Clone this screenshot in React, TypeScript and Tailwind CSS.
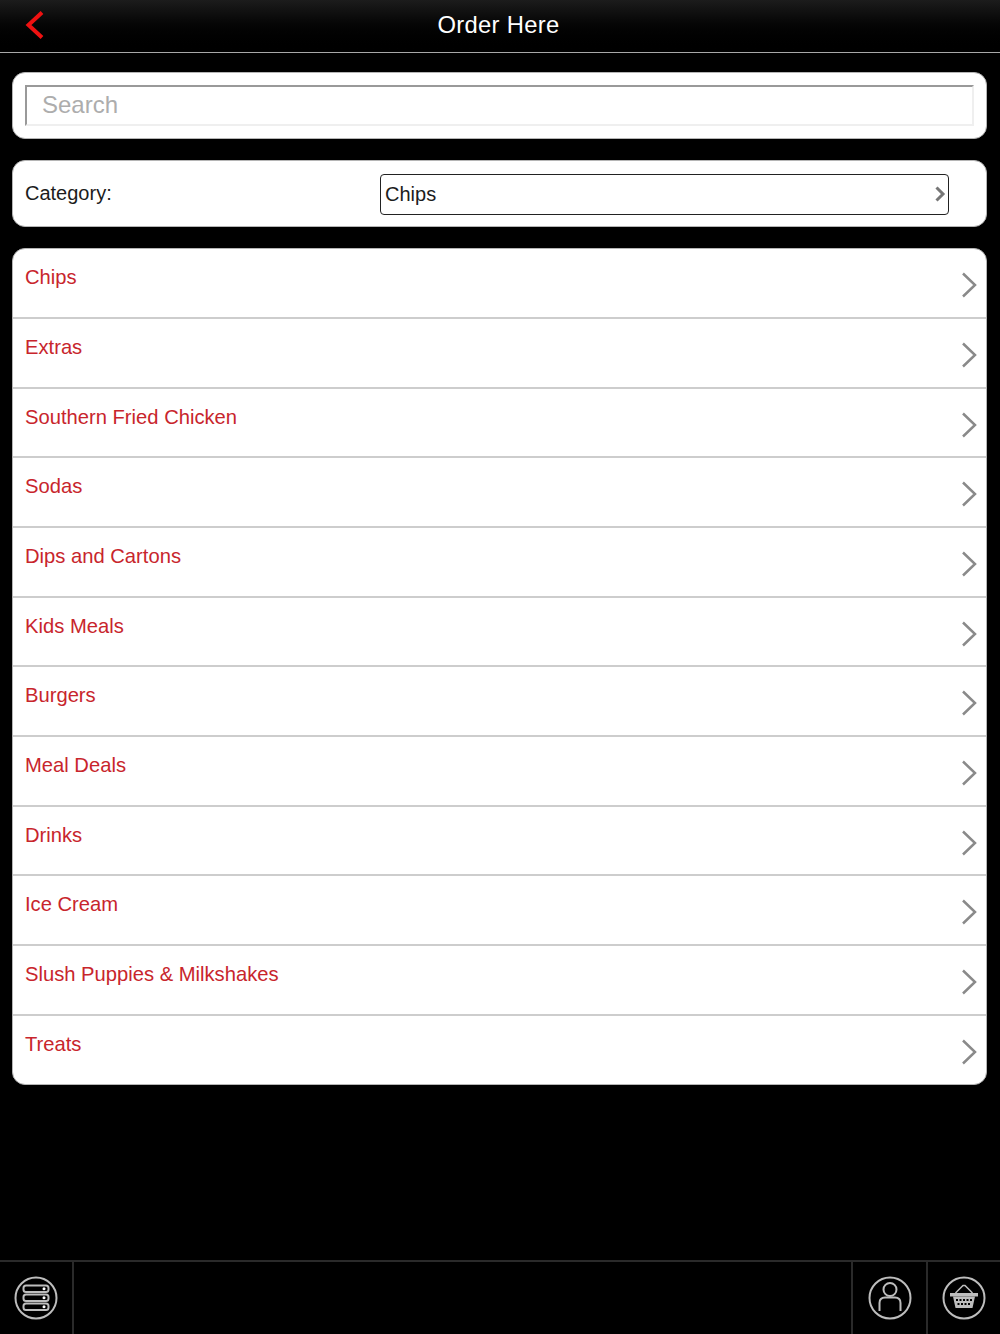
const CATEGORIES = [
  "Chips",
  "Extras",
  "Southern Fried Chicken",
  "Sodas",
  "Dips and Cartons",
  "Kids Meals",
  "Burgers",
  "Meal Deals",
  "Drinks",
  "Ice Cream",
  "Slush Puppies & Milkshakes",
  "Treats",
];

function CircleIcon({ children }: { children: React.ReactNode }) {
  return (
    <svg width="44" height="44" viewBox="0 0 44 44" fill="none" stroke="#bdbdbd" strokeWidth="2">
      <circle cx="22" cy="22" r="20.5" />
      {children}
    </svg>
  );
}

export default function App() {
  return (
    <div className="flex h-[1334px] flex-col bg-black font-['Liberation_Sans',sans-serif]">
      {/* Header */}
      <div className="relative flex h-[53px] shrink-0 items-center justify-center border-b border-[#a8a8a8] bg-gradient-to-b from-[#1c1c1c] to-[#000000] pb-[3px] pr-[3px]">
        <svg className="absolute left-[24px] top-[10px]" width="22" height="30" viewBox="0 0 22 30" fill="none">
          <path d="M18 2.5 L4.5 15 L18 27.5" stroke="#ee1111" strokeWidth="4" />
        </svg>
        <span className="text-[23.8px] tracking-[0.3px] text-white">Order Here</span>
      </div>

      <div className="flex flex-col gap-[21px] px-[12px] pt-[19px]">
        {/* Search */}
        <div className="h-[67px] w-[975px] rounded-[13px] border border-[#b5b5b5] bg-white px-[12px] pt-[12px]">
          <div className="flex h-[41px] w-[949px] items-center border-2 border-[#efefef] border-t-[#999999] border-l-[#999999] pb-[1px] pl-[15px] text-[24px] text-[#adadad]">
            Search
          </div>
        </div>

        {/* Category */}
        <div className="flex h-[67px] w-[975px] items-center rounded-[13px] border border-[#b5b5b5] bg-white pl-[12px]">
          <span className="w-[355px] pb-[2px] text-[20px] text-[#1c1c1c]">Category:</span>
          <div className="mt-[1px] flex h-[41px] w-[569px] items-center justify-between rounded-[4px] border border-[#222222] pl-[4px] pr-[2px] text-[20px] text-[#1c1c1c]">
            <span>Chips</span>
            <svg width="12" height="18" viewBox="0 0 12 18" fill="none">
              <path d="M2.5 2.5 L9 9 L2.5 15.5" stroke="#777777" strokeWidth="3" />
            </svg>
          </div>
        </div>

        {/* List */}
        <div className="w-[975px] overflow-hidden rounded-[13px] border border-[#b5b5b5] bg-white pt-[0.4px]">
          {CATEGORIES.map((name, i) => (
            <div
              key={name}
              className={`flex items-start justify-between pl-[12px] pr-[9px] ${
                i < CATEGORIES.length - 1 ? "h-[69.67px] border-b-2 border-[#cdcdcd]" : "h-[68.6px]"
              }`}
            >
              <span className="pt-[16px] text-[20.2px] leading-[24px] text-[#c8252c]">{name}</span>
              <svg className="mt-[23px]" width="16" height="26" viewBox="0 0 16 26" fill="none">
                <path d="M2 1.5 L14 13 L2 24.5" stroke="#8a8a8a" strokeWidth="2.5" />
              </svg>
            </div>
          ))}
        </div>
      </div>

      {/* Footer */}
      <div className="mt-auto flex h-[74px] items-stretch border-t-2 border-[#2a2a2a]">
        <div className="flex w-[74px] items-center justify-center border-r-2 border-[#2a2a2a]">
          <CircleIcon>
            <rect x="9.5" y="9.5" width="25" height="6.5" rx="2.5" />
            <rect x="9.5" y="18.5" width="25" height="6.5" rx="2.5" />
            <rect x="9.5" y="27.5" width="25" height="6.5" rx="2.5" />
            <circle cx="30" cy="12.7" r="1.5" fill="#ffffff" stroke="none" />
            <circle cx="30" cy="21.7" r="1.5" fill="#ffffff" stroke="none" />
            <circle cx="30" cy="30.7" r="1.5" fill="#ffffff" stroke="none" />
          </CircleIcon>
        </div>
        <div className="flex-1" />
        <div className="flex w-[75px] items-center justify-center border-l-2 border-[#2a2a2a]">
          <CircleIcon>
            <circle cx="22" cy="13.5" r="6.5" />
            <path d="M11.5 35 V27 Q11.5 21.5 17 21.5 H27 Q32.5 21.5 32.5 27 V35" />
          </CircleIcon>
        </div>
        <div className="flex w-[74px] items-center justify-center border-l-2 border-[#2a2a2a] pr-[1px]">
          <CircleIcon>
            <path d="M13.5 17 L21 9.5 H23 L30.5 17" strokeWidth="1.5" />
            <path d="M8 17 H36 V20.5 H8 Z" fill="#bdbdbd" stroke="none" />
            <path d="M11 20.5 H33 L30.5 32 H13.5 Z" fill="#bdbdbd" stroke="none" />
            <path d="M14 24 H30 M15.5 28 H28.5" stroke="#000000" strokeWidth="2" strokeDasharray="2 1.5" />
          </CircleIcon>
        </div>
      </div>
    </div>
  );
}
